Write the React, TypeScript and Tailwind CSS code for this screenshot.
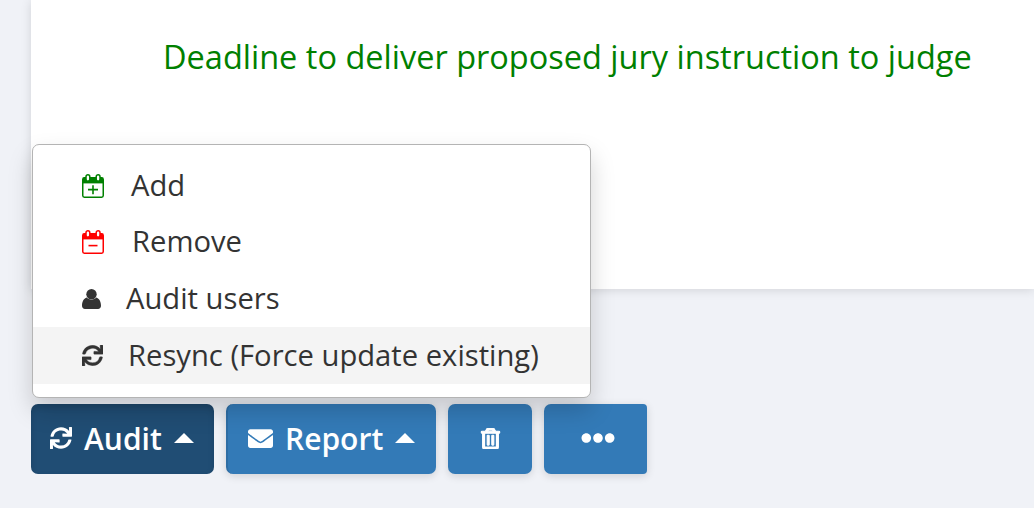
import { FaEllipsisH, FaEnvelope, FaRegTrashAlt, FaSync } from "react-icons/fa";

// calendar with the two rings and a filled header band
function CalendarIcon({ minus }: { minus?: boolean }) {
  return (
    <svg width="22" height="24" viewBox="0 0 22 24" fill="none" stroke="currentColor" strokeWidth="1.5">
      <rect x="0.75" y="3.8" width="20.5" height="19.4" rx="1.6" />
      <path d="M1 3.8h20v5.6H1z" fill="currentColor" stroke="none" />
      <rect x="4" y="0.8" width="3.8" height="6.4" rx="1.9" fill="white" />
      <rect x="14.2" y="0.8" width="3.8" height="6.4" rx="1.9" fill="white" />
      {minus ? <path d="M6.5 15.6h9" strokeWidth="1.6" /> : <path d="M6 15.6h10M11 11.2v9" strokeWidth="1.6" />}
    </svg>
  );
}

function UserIcon() {
  return (
    <svg width="19" height="20" viewBox="0 0 19 20" fill="currentColor">
      <circle cx="9.5" cy="5.2" r="5.2" />
      <path d="M0 16.8c0-4 1.5-7.3 4.8-8.3 1.2 1.4 2.9 2.2 4.7 2.2s3.5-.8 4.7-2.2c3.3 1 4.8 4.3 4.8 8.3 0 1.9-1.2 3.2-3 3.2H3c-1.8 0-3-1.3-3-3.2z" />
    </svg>
  );
}

function Caret() {
  return (
    <svg width="20" height="10" viewBox="0 0 20 10" className="ml-[12px] mb-[1px]" fill="currentColor">
      <path d="M10 0l10 10H0z" />
    </svg>
  );
}

const items = [
  { label: "Add", icon: <CalendarIcon />, color: "text-[#008000]", iconBox: "w-[49px]", pad: "pt-[2px]" },
  { label: "Remove", icon: <CalendarIcon minus />, color: "text-[#ff0000]", iconBox: "w-[50px]", pad: "pt-[1px]" },
  { label: "Audit users", icon: <UserIcon />, color: "text-[#333333]", iconBox: "w-[44px]", pad: "pt-[1px]" },
  { label: "Resync (Force update existing)", icon: <FaSync className="text-[21px]" stroke="currentColor" strokeWidth={8} />, color: "text-[#333333]", iconBox: "w-[46px]", pad: "" },
];

export default function App() {
  return (
    <div className="relative h-[508px] w-[1034px] overflow-hidden bg-[#f0f2f7] font-['Open_Sans',sans-serif]">
      <div className="ml-[31px] h-[289px] bg-white pl-[132px] pt-[35px] shadow-[0_1px_10px_rgba(0,0,0,0.13)]">
        <p className="whitespace-nowrap text-[32.5px] leading-[44px] text-[#008000]">
          Deadline to deliver proposed jury instruction to judge
        </p>
      </div>

      <div className="absolute left-[32px] top-[144px] h-[254px] w-[559px] rounded-[7px] border border-[#b4b4b4] bg-white pt-[11px] shadow-[0_12px_24px_rgba(0,0,0,0.175)]">
        {items.map((item) => (
          <div
            key={item.label}
            className={`flex h-[57px] items-center pl-[49px] text-[29.2px] text-[#333333] ${item.pad} ${item.label.startsWith("Resync") ? "bg-[#f4f4f4]" : ""}`}
          >
            <span className={`${item.iconBox} ${item.color} shrink-0`}>{item.icon}</span>
            <span className="whitespace-nowrap">{item.label}</span>
          </div>
        ))}
      </div>

      <div className="ml-[31px] mt-[115px] flex gap-[12px] text-[30px] font-semibold text-white">
        <button className="flex h-[70px] w-[183px] items-center rounded-[7px] bg-[#204d74] pb-[2px] pl-[19px] shadow-[inset_0_3px_6px_rgba(0,0,0,0.13)]">
          <FaSync className="text-[22px]" />
          <span className="ml-[12px]">Audit</span>
          <Caret />
        </button>
        <button className="flex h-[70px] w-[210px] items-center rounded-[7px] border-l-2 border-[#2e6da4] bg-[#337ab7] pb-[2px] pl-[20px] shadow-[0_2px_8px_rgba(0,0,0,0.14)]">
          <FaEnvelope className="text-[25px]" />
          <span className="ml-[12px]">Report</span>
          <Caret />
        </button>
        <button className="flex h-[70px] w-[84px] items-center justify-center rounded-[7px] bg-[#337ab7] pb-[2px] shadow-[0_2px_8px_rgba(0,0,0,0.14)]">
          <FaRegTrashAlt className="text-[21px]" stroke="currentColor" strokeWidth={28} />
        </button>
        <button className="flex h-[70px] w-[103px] items-center justify-center rounded-l-[7px] rounded-r-[4px] bg-[#337ab7] pb-[2px] pl-[4px] shadow-[0_2px_8px_rgba(0,0,0,0.14)]">
          <FaEllipsisH className="text-[34px]" />
        </button>
      </div>
    </div>
  );
}
